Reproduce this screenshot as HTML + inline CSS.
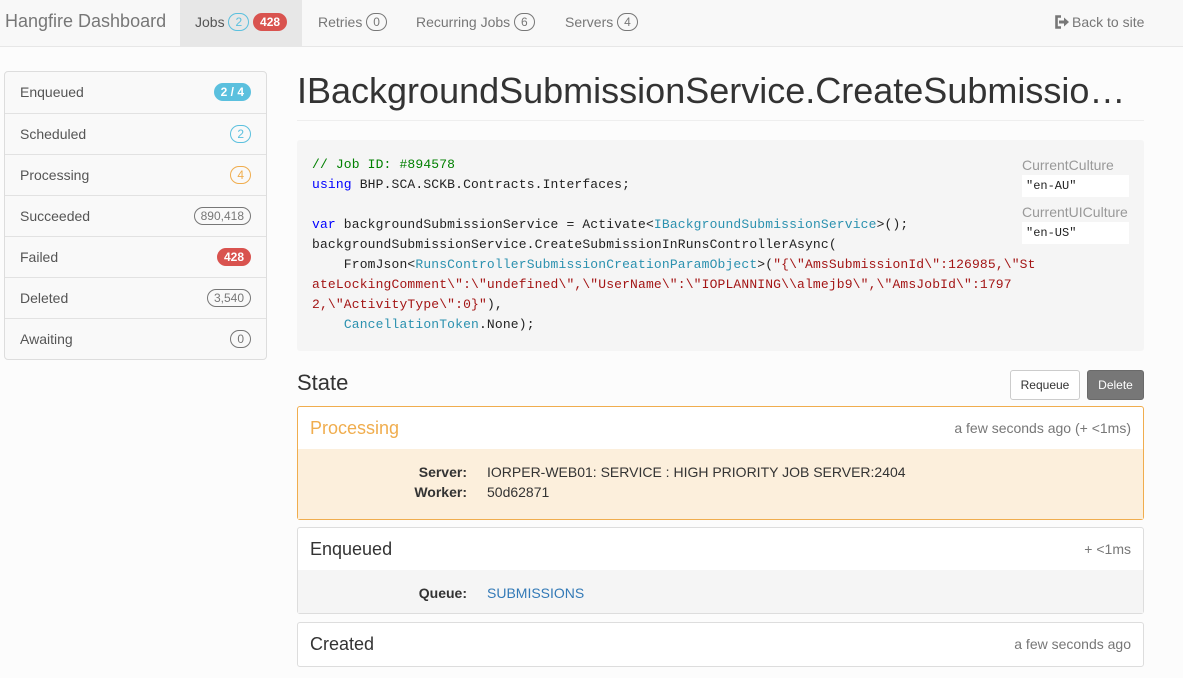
<!DOCTYPE html>
<html><head><meta charset="utf-8"><style>
*{box-sizing:border-box}
body{margin:0;width:1183px;height:678px;overflow:hidden;background:#fcfcfc;font-family:"Liberation Sans",sans-serif;font-size:14px;color:#333}
.nav{position:absolute;left:0;top:0;width:1183px;height:47px;background:#f8f8f8;border-bottom:1px solid #e7e7e7}
.nav .brand{position:absolute;left:5px;top:11px;font-size:18px;color:#777}
.nav .it{position:absolute;top:0;height:46px;line-height:44px;color:#777;font-size:14px}
.b{display:inline-block;font-size:12px;line-height:16px;padding:0 6px;border-radius:9px;border:1px solid #777;color:#777;vertical-align:1px}
.b.info{border-color:#5bc0de;color:#5bc0de}.b.warn{border-color:#f0ad4e;color:#f0ad4e}
.b.red{background:#d9534f;border-color:#d9534f;color:#fff;font-weight:bold}
.b.blue{background:#5bc0de;border-color:#5bc0de;color:#fff;font-weight:bold}
.side{position:absolute;left:4px;top:71px;width:263px;border:1px solid #ddd;border-radius:4px;background:#f9f9f9}
.side div{height:41px;border-top:1px solid #e2e2e2;padding:0 15px;line-height:40px;color:#555;position:relative}
.side div:first-child{border-top:0}
.side .b{position:absolute;right:15px;top:11px}
h1{position:absolute;left:297px;top:70px;margin:0;width:840px;font-weight:normal;font-size:36px;white-space:nowrap;overflow:hidden;text-overflow:ellipsis;color:#333}
.hr{position:absolute;left:297px;top:120px;width:847px;border-top:1px solid #eee}
.code{position:absolute;left:297px;top:140px;width:847px;height:211px;background:#f5f5f5;border-radius:3px}
pre{position:absolute;left:15px;top:15px;margin:0;font-family:"Liberation Mono",monospace;font-size:13px;letter-spacing:0.15px;line-height:20px;color:#222}
.cm{color:#008000}.kw{color:#0000ff}.ty{color:#2b91af}.st{color:#a31515}
.cl{position:absolute;left:725px;font-size:14px;color:#999}
.cv{position:absolute;left:725px;width:107px;height:22px;background:#fff;font-family:"Liberation Mono",monospace;font-size:12px;line-height:22px;padding-left:4px;color:#222}
h3{position:absolute;left:297px;top:370px;margin:0;font-size:22px;font-weight:normal}
.btn{position:absolute;top:370px;height:30px;line-height:28px;font-size:12px;border:1px solid #ccc;border-radius:3px;text-align:center}
.panel{position:absolute;left:297px;width:847px;border:1px solid #ddd;border-radius:3px;background:#fff}
.ph{height:42px;padding:0 12px;line-height:42px;font-size:18px;position:relative}
.ph span{position:absolute;right:12px;top:0;font-size:14px;color:#777}
.row{position:absolute;font-size:14px}
.lab{position:absolute;right:676px;font-weight:bold;text-align:right}
</style></head><body>
<div class="nav">
<div class="brand">Hangfire Dashboard</div>
<div class="it" style="left:180px;width:122px;background:#e7e7e7;padding-left:15px;color:#555">Jobs <span class="b info">2</span> <span class="b red">428</span></div>
<div class="it" style="left:318px">Retries <span class="b">0</span></div>
<div class="it" style="left:416px">Recurring Jobs <span class="b">6</span></div>
<div class="it" style="left:565px">Servers <span class="b">4</span></div>
<div class="it" style="left:1054px"><svg width="16" height="14" viewBox="0 0 16 14" style="vertical-align:-2px;margin-right:2px"><path d="M7 1.5H2.5v11H7" fill="none" stroke="#777" stroke-width="2.6"/><path d="M5 5.5h5V2.5l5 4.5-5 4.5V8.5H5z" fill="#777"/></svg>Back to site</div>
</div>
<div class="side">
<div>Enqueued<span class="b blue">2 / 4</span></div>
<div>Scheduled<span class="b info">2</span></div>
<div>Processing<span class="b warn">4</span></div>
<div>Succeeded<span class="b">890,418</span></div>
<div>Failed<span class="b red">428</span></div>
<div>Deleted<span class="b">3,540</span></div>
<div>Awaiting<span class="b">0</span></div>
</div>
<h1>IBackgroundSubmissionService.CreateSubmissionInRunsControllerAsync</h1>
<div class="hr"></div>
<div class="code">
<pre><span class="cm">// Job ID: #894578</span>
<span class="kw">using</span> BHP.SCA.SCKB.Contracts.Interfaces;

<span class="kw">var</span> backgroundSubmissionService = Activate&lt;<span class="ty">IBackgroundSubmissionService</span>&gt;();
backgroundSubmissionService.CreateSubmissionInRunsControllerAsync(
    FromJson&lt;<span class="ty">RunsControllerSubmissionCreationParamObject</span>&gt;(<span class="st">"{\"AmsSubmissionId\":126985,\"St
ateLockingComment\":\"undefined\",\"UserName\":\"IOPLANNING\\almejb9\",\"AmsJobId\":1797
2,\"ActivityType\":0}"</span>),
    <span class="ty">CancellationToken</span>.None);</pre>
<div class="cl" style="top:17px">CurrentCulture</div>
<div class="cv" style="top:35px">"en-AU"</div>
<div class="cl" style="top:64px">CurrentUICulture</div>
<div class="cv" style="top:82px">"en-US"</div>
</div>
<h3>State</h3>
<div class="btn" style="left:1010px;width:70px;background:#fff">Requeue</div>
<div class="btn" style="left:1087px;width:57px;background:#777;border-color:#6a6a6a;color:#fff">Delete</div>
<div class="panel" style="top:406px;height:114px;border-color:#f0ad4e">
<div class="ph" style="color:#f0ad4e">Processing<span>a few seconds ago (+ &lt;1ms)</span></div>
<div style="background:#fcefdc;height:70px;position:relative">
<div class="lab" style="top:15px">Server:</div><div class="row" style="left:189px;top:15px">IORPER-WEB01: SERVICE : HIGH PRIORITY JOB SERVER:2404</div>
<div class="lab" style="top:35px">Worker:</div><div class="row" style="left:189px;top:35px">50d62871</div>
</div></div>
<div class="panel" style="top:527px;height:87px">
<div class="ph">Enqueued<span>+ &lt;1ms</span></div>
<div style="background:#f5f5f5;height:43px;position:relative">
<div class="lab" style="top:15px">Queue:</div><div class="row" style="left:189px;top:15px;color:#337ab7">SUBMISSIONS</div>
</div></div>
<div class="panel" style="top:622px;height:45px">
<div class="ph">Created<span>a few seconds ago</span></div>
</div>
</body></html>
